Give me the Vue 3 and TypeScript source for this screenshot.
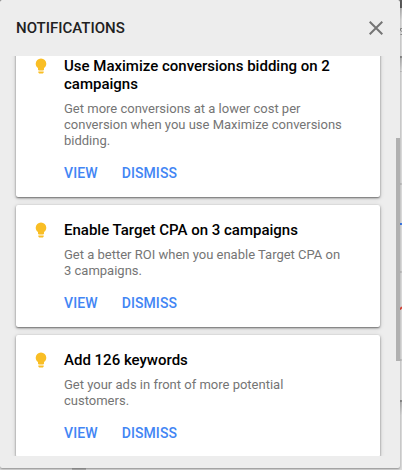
<script setup lang="ts">
interface Notice {
  title: string
  body: string
}

const notices: Notice[] = [
  {
    title: 'Use Maximize conversions bidding on 2 campaigns',
    body: 'Get more conversions at a lower cost per conversion when you use Maximize conversions bidding.',
  },
  {
    title: 'Enable Target CPA on 3 campaigns',
    body: 'Get a better ROI when you enable Target CPA on 3 campaigns.',
  },
  {
    title: 'Add 126 keywords',
    body: 'Get your ads in front of more potential customers.',
  },
]
</script>

<template>
  <div class="page">
    <svg class="backdrop" width="402" height="470" viewBox="0 0 402 470" aria-hidden="true">
      <defs>
        <linearGradient id="bar-shade" x1="0" y1="0" x2="0" y2="1">
          <stop offset="0" stop-color="#b4b4b4" />
          <stop offset="1" stop-color="#dedede" />
        </linearGradient>
      </defs>
      <rect width="402" height="470" fill="#dcdcdc" />
      <rect width="3" height="3" fill="#777" />
      <rect x="398" width="4" height="8" fill="#5c5c5c" />
      <rect x="400" y="8" width="2" height="12" fill="url(#bar-shade)" />
      <path d="M402 28.5h-1.5v2l1.5 1M402 34.5h-1.5" stroke="#8a8a8a" fill="none" />
      <rect x="400" y="56" width="2" height="2" fill="#8c8c8c" />
      <rect x="400" y="58" width="2" height="13" fill="url(#bar-shade)" />
      <rect x="400" y="71" width="2" height="1" fill="#c2c2c2" />
      <rect x="400" y="183" width="2" height="2" fill="#c4c4c4" />
      <rect x="400" y="223" width="2" height="2" fill="#3b78e7" />
      <rect x="400" y="271" width="2" height="2" fill="#c4c4c4" />
      <path d="M400 309.5l2-2.5" stroke="#db4437" stroke-width="2" />
      <rect x="400" y="359" width="2" height="2" fill="#c4c4c4" />
      <rect x="400" y="400" width="2" height="2" fill="#8c8c8c" />
      <rect x="400" y="402" width="2" height="14" fill="url(#bar-shade)" />
      <rect x="72" y="468" width="14" height="2" fill="#b4b4b4" />
    </svg>
    <section class="panel">
      <header class="header">
        <h1 class="heading">NOTIFICATIONS</h1>
        <button class="close" aria-label="Close">
          <svg width="14" height="14" viewBox="0 0 14 14">
            <path d="M.7.7l12.6 12.6M13.3.7L.7 13.3" stroke="#757575" stroke-width="2" />
          </svg>
        </button>
      </header>
      <div class="list">
        <article v-for="notice in notices" :key="notice.title" class="card">
          <svg class="bulb" width="18" height="18" viewBox="0 0 18 18">
            <path
              fill="#f9be25"
              d="M9 1.4a5.3 5.3 0 0 0-5.3 5.3c0 1.8.9 3.3 2.3 4.3v1.6c0 .5.3.8.8.8h4.4c.5 0 .8-.3.8-.8V11c1.4-1 2.3-2.5 2.3-4.3A5.3 5.3 0 0 0 9 1.4zM6.3 14.5h5.4v1l-.8 1H7.1l-.8-1z"
            />
          </svg>
          <div class="content">
            <h2 class="title">{{ notice.title }}</h2>
            <p class="body">{{ notice.body }}</p>
            <div class="actions">
              <button class="action">VIEW</button>
              <button class="action">DISMISS</button>
            </div>
          </div>
        </article>
      </div>
      <div class="scrollbar"></div>
    </section>
  </div>
</template>

<style>
body {
  margin: 0;
  overflow: hidden;
}
</style>

<style scoped>
.page {
  position: relative;
  width: 402px;
  height: 470px;
  overflow: hidden;
  font-family: Roboto, "Liberation Sans", sans-serif;
}
.backdrop {
  position: absolute;
  inset: 0;
}
.panel {
  position: relative;
  box-sizing: border-box;
  width: 400px;
  height: 468px;
  background: #ededed;
  border-radius: 2px;
  box-shadow: 0 1px 2px rgba(0, 0, 0, 0.35);
}
.header {
  display: flex;
  align-items: center;
  justify-content: space-between;
  height: 56px;
  padding: 0 17px 0 16px;
}
.heading {
  margin: 0;
  font-size: 15px;
  font-weight: 500;
  line-height: 20px;
  color: #212121;
}
button {
  padding: 0;
  border: 0;
  background: none;
  font-family: inherit;
}
.close {
  display: flex;
}
.list {
  box-sizing: border-box;
  display: flex;
  flex-direction: column;
  gap: 8px;
  height: 400px;
  padding: 0 20px 0 16px;
  overflow: hidden;
}
.card {
  display: flex;
  flex: none;
  gap: 14px;
  box-sizing: border-box;
  padding: 16px 32px 14px 16px;
  background: #fff;
  border-radius: 2px;
  box-shadow: 0 1px 2px rgba(0, 0, 0, 0.5), 0 1px 5px rgba(0, 0, 0, 0.16);
}
.card:first-child {
  margin-top: -15px;
}
.bulb {
  flex: none;
}
.content {
  flex: 1;
}
.title {
  margin: 0;
  font-size: 15px;
  font-weight: 500;
  line-height: 18px;
  color: #000;
}
.body {
  margin: 8px 0 14px;
  font-size: 13px;
  line-height: 16px;
  color: #757575;
}
.actions {
  display: flex;
  gap: 24px;
}
.action {
  font-size: 14px;
  font-weight: 500;
  line-height: 20px;
  letter-spacing: 0.1px;
  color: #4285f4;
}
.scrollbar {
  position: absolute;
  top: 138px;
  right: 0;
  width: 4px;
  height: 223px;
  background: #b0b0b0;
}
</style>
